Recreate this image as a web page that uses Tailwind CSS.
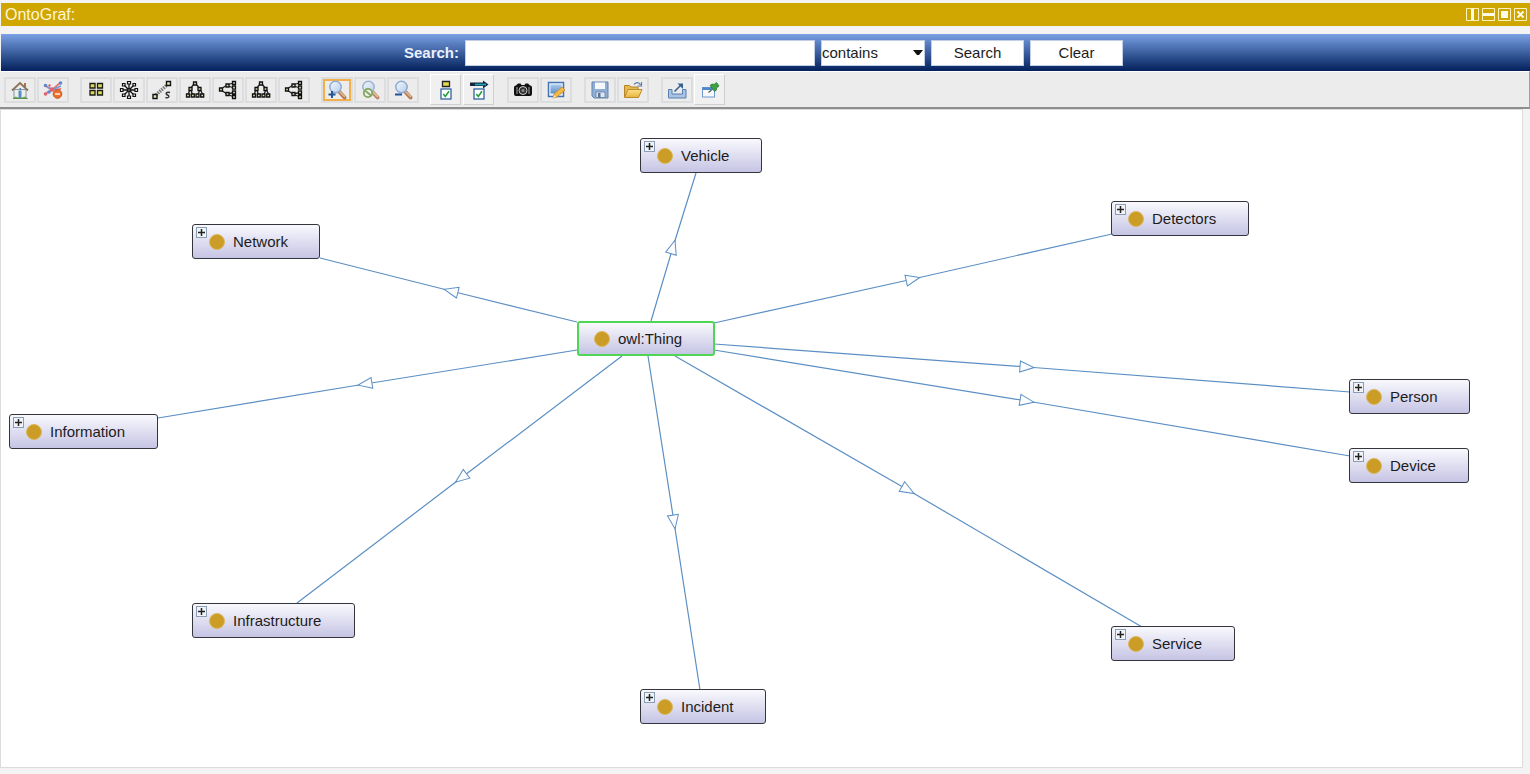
<!DOCTYPE html>
<html lang="en">
<head>
<meta charset="utf-8">
<meta name="viewport" content="width=device-width, initial-scale=1">
<title>OntoGraf</title>
<script src="https://cdn.jsdelivr.net/npm/@tailwindcss/browser@4"></script>
</head>
<body class="min-h-screen flex flex-col bg-[#f3f3f3] font-['Liberation_Sans',Arial,sans-serif] text-[#1c1c1c]">

<!-- Shared icon shapes -->
<svg class="absolute size-0" aria-hidden="true">
  <defs>
    <linearGradient id="lens" x1="0" y1="0" x2="1" y2="1"><stop offset="0" stop-color="#f4f9fe"/><stop offset="1" stop-color="#b4cdec"/></linearGradient>
    <linearGradient id="blue" x1="0" y1="0" x2="0" y2="1"><stop offset="0" stop-color="#a9c8ee"/><stop offset="1" stop-color="#5f8fcb"/></linearGradient>
    <linearGradient id="folder" x1="0" y1="0" x2="0" y2="1"><stop offset="0" stop-color="#fbe08a"/><stop offset="1" stop-color="#e9b437"/></linearGradient>
  </defs>
  <symbol id="i-tree-v" viewBox="0 0 20 20">
    <path d="M9 4L5 9L3 15M6 10L7.500 15M11 4L15 9L13 15M15.500 10L18 15" fill="none" stroke="#222" stroke-width="1.300"/>
    <g fill="#d8d8b0" stroke="#111" stroke-width="1.300"><path d="M8.500 2h3v3h-3zM4 7.500h3v3h-3zM13 7.500h3v3h-3zM1.500 14h3v3h-3zM6.300 14h3v3h-3zM11 14h3v3h-3zM15.700 14h3v3h-3z"/></g>
  </symbol>
  <symbol id="i-tree-h" viewBox="0 0 20 20">
    <path d="M3 9L9 5L15 3M10 6L16 8M3 10L9 14L16 12.500M10 14.500L16 17" fill="none" stroke="#222" stroke-width="1.300"/>
    <g fill="#d8d8b0" stroke="#111" stroke-width="1.300"><path d="M1.500 8h3v3h-3zM8 4h3v3h-3zM8 12.500h3v3h-3zM14.500 1.500h3v3h-3zM14.500 6.200h3v3h-3zM14.500 11h3v3h-3zM14.500 15.500h3v3h-3z"/></g>
  </symbol>
  <symbol id="i-lens" viewBox="0 0 20 20">
    <path d="M12.500 12L17.500 17.500" stroke="#b77a55" stroke-width="4" stroke-linecap="round"/>
    <path d="M13 12L17.500 16.500" stroke="#e3b994" stroke-width="1.600" stroke-linecap="round"/>
    <circle cx="8.500" cy="7" r="5.700" fill="url(#lens)" stroke="#8eaad2" stroke-width="1.500"/>
  </symbol>
  <symbol id="i-check" viewBox="0 0 12 12">
    <rect x="1" y="1" width="10" height="10" fill="#fff" stroke="#23579a" stroke-width="1.200"/>
    <path d="M3.300 6L5.300 8.500L9 3.300" fill="none" stroke="#24a03c" stroke-width="1.600"/>
  </symbol>
  <symbol id="i-plus" viewBox="0 0 11 11">
    <rect x=".5" y=".5" width="10" height="10" fill="#f0f4f8" stroke="#8b9db5"/>
    <path d="M2 5.500h7M5.500 2v7" stroke="#222" stroke-width="1.500"/>
  </symbol>
</svg>

<header class="mt-[3px] ml-px flex h-[23px] items-center justify-between bg-[#cfa700] pr-[3px] pl-1 text-[#fff5d8]">
  <h1 class="text-base leading-5">OntoGraf:</h1>
  <div class="flex gap-[3px]">
    <button aria-label="Split vertically" class="block"><svg class="block size-[13px]" viewBox="0 0 13 13"><path d="M.5.5h12v12H.5z" fill="none" stroke="#fff3c0"/><path d="M5 1h3v11H5z" fill="#fffbe8"/></svg></button>
    <button aria-label="Split horizontally" class="block"><svg class="block size-[13px]" viewBox="0 0 13 13"><path d="M.5.5h12v12H.5z" fill="none" stroke="#fff3c0"/><path d="M1 5h11v3H1z" fill="#fffbe8"/></svg></button>
    <button aria-label="Float" class="block"><svg class="block size-[13px]" viewBox="0 0 13 13"><path d="M.5.5h12v12H.5z" fill="none" stroke="#fff3c0"/><path d="M3 3h7v7H3z" fill="#fffbe8"/></svg></button>
    <button aria-label="Close" class="block"><svg class="block size-[13px]" viewBox="0 0 13 13"><path d="M.5.5h12v12H.5z" fill="none" stroke="#fff3c0"/><path d="M3.500 3.500l6 6M9.500 3.500l-6 6" stroke="#fffbe8" stroke-width="2"/></svg></button>
  </div>
</header>

<form class="mt-2 ml-px flex h-[37px] items-center justify-center bg-linear-to-b from-[#7ba2e6] to-[#04215c] pr-1 text-[15px] leading-5" onsubmit="return false">
  <label for="q" class="mr-[6px] font-bold text-[#eaf0fc]">Search:</label>
  <input id="q" type="text" class="h-[26px] w-[350px] border border-[#c3cfe6] bg-white px-1 outline-none">
  <div class="relative ml-[6px] h-[26px] w-[104px]">
    <select aria-label="Match mode" class="h-full w-full appearance-none border border-[#c3cfe6] bg-white"><option>contains</option><option>starts with</option><option>ends with</option><option>exact match</option><option>regexp</option></select>
    <svg class="pointer-events-none absolute top-[10px] right-[2px] h-[6px] w-[10px]" viewBox="0 0 10 6"><path d="M0 0h10L6 5H4z" fill="#111"/></svg>
  </div>
  <button class="ml-[6px] h-[26px] w-[93px] border border-[#c3cfe6] bg-white">Search</button>
  <button type="button" class="ml-[6px] h-[26px] w-[93px] border border-[#c3cfe6] bg-white">Clear</button>
</form>

<div role="toolbar" aria-label="Graph tools" class="flex h-[38px] items-center gap-[11px] border-t border-r border-b-2 border-t-white border-r-[#a0a0a0] border-b-[#8e8e8e] bg-[#ececec] pl-1">
  <div class="flex gap-px">
    <button aria-label="Home" class="flex h-[26px] w-8 items-center justify-center border-2 border-[#dcdddf]"><svg class="size-5 shrink-0" viewBox="0 0 20 20"><path d="M4 9.500h12V18H4z" fill="#e9f1ea" stroke="#8795a5"/><path d="M14 3v4l2 2V3z" fill="#b86e42"/><path d="M2 10.500L10 3l8 7.500" fill="none" stroke="#8b7359" stroke-width="1.800"/><path d="M8.500 10.500h3V18h-3z" fill="#5b8ac3"/><path d="M9.500 8h1.500v1.500H9.500z" fill="#4d79b5"/><path d="M3 18.500c2-2.500 4-2 5 0zM12 18.500c1-2 4-2.500 5.500 0z" fill="#6aa64d"/><path d="M3 18.500h14.500" stroke="#5c9349"/></svg></button>
    <button aria-label="Clear graph" class="flex h-[26px] w-8 items-center justify-center border-2 border-[#dcdddf]"><svg class="size-5 shrink-0" viewBox="0 0 20 20"><path d="M2 5.500L9 10L17 3M2 14L9 10L18 9" fill="none" stroke="#e2747c" stroke-width="1.800"/><path d="M5 7.500L10 9.500L18 6" fill="none" stroke="#6e99d8" stroke-width="1.500"/><g fill="#5c88d0"><circle cx="2.500" cy="5.500" r="1.800"/><circle cx="17.500" cy="3" r="1.800"/><circle cx="6" cy="12" r="1.800"/></g><g fill="#e0606c"><circle cx="2.500" cy="14" r="1.800"/><circle cx="9" cy="9.500" r="2.200"/><circle cx="6.500" cy="5.500" r="1.200"/></g><circle cx="14.500" cy="14" r="4.300" fill="#e9722f" stroke="#c65618"/><path d="M12 14h5" stroke="#ffe8cf" stroke-width="1.600"/></svg></button>
  </div>

  <div class="flex gap-px">
    <button aria-label="Grid layout" class="flex h-[26px] w-8 items-center justify-center border-2 border-[#dcdddf]"><svg class="size-5 shrink-0" viewBox="0 0 20 20"><g fill="#dcd95a" stroke="#1b1b12" stroke-width="1.300"><path d="M4 3.500h5v4.500H4zM11.500 3.500h5v4.500h-5zM4 10.500h5V15H4zM11.500 10.500h5V15h-5z"/></g></svg></button>
    <button aria-label="Radial layout" class="flex h-[26px] w-8 items-center justify-center border-2 border-[#dcdddf]"><svg class="size-5 shrink-0" viewBox="0 0 20 20"><path d="M10 3v14M3 10h14M5 5l10 10M15 5L5 15" stroke="#111" stroke-width="1.300"/><g fill="#eee" stroke="#111" stroke-width="1.200"><path d="M8.500 1.500h3v2.500h-3zM8.500 16h3v2.500h-3zM1.500 8.500H4v3H1.500zM16 8.500h2.500v3H16zM3.500 3.500H6V6H3.500zM14 3.500h2.500V6H14zM3.500 14H6v2.500H3.500zM14 14h2.500v2.500H14z"/><path d="M8.500 8.500h3v3h-3z" fill="#555"/></g></svg></button>
    <button aria-label="Spring layout" class="flex h-[26px] w-8 items-center justify-center border-2 border-[#dcdddf]"><svg class="size-5 shrink-0" viewBox="0 0 20 20"><path d="M4 15L16 4" stroke="#777" stroke-width="3.500" stroke-dasharray="1.500 1"/><path d="M14.500 1.500h4v4h-4zM1 14.500h4v4H1z" fill="#e6e6b2" stroke="#111" stroke-width="1.400"/><path d="M18 12.500c-4-1-5 1.500-2.500 2.500s1.500 3.500-2 2.500" fill="none" stroke="#333" stroke-width="1.400"/></svg></button>
    <button aria-label="Vertical tree" class="flex h-[26px] w-8 items-center justify-center border-2 border-[#dcdddf]"><svg class="size-5 shrink-0"><use href="#i-tree-v"/></svg></button>
    <button aria-label="Horizontal tree" class="flex h-[26px] w-8 items-center justify-center border-2 border-[#dcdddf]"><svg class="size-5 shrink-0"><use href="#i-tree-h"/></svg></button>
    <button aria-label="Vertical directed layout" class="flex h-[26px] w-8 items-center justify-center border-2 border-[#dcdddf]"><svg class="size-5 shrink-0"><use href="#i-tree-v"/></svg></button>
    <button aria-label="Horizontal directed layout" class="flex h-[26px] w-8 items-center justify-center border-2 border-[#dcdddf]"><svg class="size-5 shrink-0"><use href="#i-tree-h"/></svg></button>
  </div>

  <div class="flex gap-px">
    <button aria-label="Zoom in" class="flex h-[26px] w-8 items-center justify-center border-2 border-[#dcdddf]"><span class="flex h-[22px] w-7 items-center justify-center border-2 border-[#f2b04c]"><svg class="size-5 shrink-0" viewBox="0 0 20 20"><use href="#i-lens"/><path d="M1.500 14.500h7M5 11v7" stroke="#1d5397" stroke-width="1.900"/></svg></span></button>
    <button aria-label="No zoom" class="flex h-[26px] w-8 items-center justify-center border-2 border-[#dcdddf]"><svg class="size-5 shrink-0 opacity-85" viewBox="0 0 20 20"><use href="#i-lens"/><circle cx="8" cy="13" r="4.200" fill="#eef2e6" stroke="#709a46" stroke-width="1.800"/><path d="M5 10.500l6 5" stroke="#709a46" stroke-width="1.700"/></svg></button>
    <button aria-label="Zoom out" class="flex h-[26px] w-8 items-center justify-center border-2 border-[#dcdddf]"><svg class="size-5 shrink-0" viewBox="0 0 20 20"><use href="#i-lens"/><path d="M2 14.500h7" stroke="#1d5397" stroke-width="2"/></svg></button>
  </div>

  <div class="flex gap-[2px]">
    <button aria-label="Node types" class="flex h-[31px] w-[31px] items-center justify-center border border-t-white border-l-white border-[#cfcfcf] bg-[#f0f0f0]"><svg class="h-5 w-5 shrink-0" viewBox="0 0 20 20"><path d="M6.500 1.500h7v5h-7z" fill="#e0db4f" stroke="#222" stroke-width="1.300"/><use href="#i-check" x="4" y="8" width="12" height="12"/></svg></button>
    <button aria-label="Arc types" class="flex h-[31px] w-[31px] items-center justify-center border border-t-white border-l-white border-[#cfcfcf] bg-[#f0f0f0]"><svg class="h-5 w-5 shrink-0" viewBox="0 0 20 20"><path d="M1 2.500h13V.500L19.500 4.500L14 8.500V6H1z" fill="#13283a"/><path d="M6 4.500h11" stroke="#1fa6bd" stroke-width="1.700"/><use href="#i-check" x="4" y="8" width="12" height="12"/></svg></button>
  </div>

  <div class="ml-[2px] flex gap-px">
    <button aria-label="Export image" class="flex h-[26px] w-8 items-center justify-center border-2 border-[#dcdddf]"><svg class="size-5 shrink-0" viewBox="0 0 20 20"><path d="M1 7.500Q1 5.500 3 5.500L5 3.500h2.500l1 1.500h3l1-1.500H15l2 2Q19 5.500 19 7.500V14Q19 16 17 16H3Q1 16 1 14z" fill="#111"/><circle cx="10" cy="10.500" r="4" fill="#333" stroke="#ccc"/><circle cx="10" cy="10.500" r="1.600" fill="#888"/><path d="M4 7v7M16 7v7" stroke="#aaa"/></svg></button>
    <button aria-label="Edit notes" class="flex h-[26px] w-8 items-center justify-center border-2 border-[#dcdddf]"><svg class="size-5 shrink-0" viewBox="0 0 20 20"><rect x="2.500" y="2.500" width="15" height="14" fill="#eaf2fb" stroke="#4475b5" stroke-width="1.500"/><path d="M4.500 4.500h11v9h-11z" fill="url(#blue)"/><path d="M7 18l1-4L16 7l3 3-8 7z" fill="#f4b942" stroke="#bf852a" stroke-width=".8"/><path d="M7 18l1-3 2 2z" fill="#fbe7b8"/></svg></button>
  </div>

  <div class="ml-px flex gap-px">
    <button aria-label="Save graph" class="flex h-[26px] w-8 items-center justify-center border-2 border-[#dcdddf]"><svg class="size-5 shrink-0" viewBox="0 0 20 20"><path d="M2 2h16v16H4l-2-2z" fill="#8eaed6" stroke="#6583ad"/><path d="M5 2.500h10V9H5z" fill="#f5f8fb"/><path d="M6 12h9v5.500H6z" fill="#e0e6ed" stroke="#6681a5" stroke-width=".8"/><path d="M8 13h2.500v4.500H8z" fill="#54739f"/></svg></button>
    <button aria-label="Open graph" class="flex h-[26px] w-8 items-center justify-center border-2 border-[#dcdddf]"><svg class="size-5 shrink-0" viewBox="0 0 20 20"><path d="M1.500 17V5.500h5L8 7h7v4" fill="#e7ba50" stroke="#b58428"/><path d="M1.500 17.500L5 9.500h14l-3.500 8z" fill="url(#folder)" stroke="#b9892d"/><path d="M11 4.500C13 2 16 2 17.500 5M18.500 2v4h-4" fill="none" stroke="#607fa8" stroke-width="1.200"/></svg></button>
  </div>

  <div class="ml-px flex items-center gap-px">
    <button aria-label="Export graph" class="flex h-[26px] w-8 items-center justify-center border-2 border-[#dcdddf]"><svg class="size-5 shrink-0" viewBox="0 0 20 20"><path d="M1.500 9.500h3.500v4.500h10.500V9.500H19v8.500H1.500z" fill="#aac3e2" stroke="#577fae"/><path d="M7.500 11.500L14 5" stroke="#34618f" stroke-width="1.600"/><path d="M10.500 3.500h5.500V9z" fill="#34618f"/></svg></button>
    <button aria-label="Pin tooltips" class="flex h-[31px] w-[31px] items-center justify-center border border-t-white border-l-white border-[#cfcfcf] bg-[#f0f0f0]"><svg class="size-5 shrink-0" viewBox="0 0 20 20"><rect x="2.500" y="7.500" width="12" height="9.500" fill="#f7fafd" stroke="#6c98ce"/><path d="M2.500 7.500h12v2.500h-12z" fill="#4f87cf"/><path d="M11.500 10L8.500 12.500" stroke="#555" stroke-width="1.200"/><path d="M10 5.500l2-1.500 2 .500 2.500-2 2.500 3.500-2.500 2 0 2-2 1.500z" fill="#3fa045" stroke="#277a30" stroke-width=".8"/></svg></button>
  </div>
</div>

<!-- Graph canvas: nodes sit at free positions, arcs are drawn underneath -->
<main class="relative mr-[7px] mb-[6px] min-h-[659px] flex-1 overflow-hidden border border-[#dcdcdc] bg-white text-[15px] leading-5">
  <svg class="absolute top-0 left-0 h-[657px] w-[1521px]" viewBox="1 110 1521 657" aria-hidden="true">
    <defs>
      <marker id="arrow" viewBox="-8 -6 16 12" markerWidth="16" markerHeight="12" markerUnits="userSpaceOnUse" orient="auto" overflow="visible">
        <path d="M-7-5.500L7 0L-7 5.500Z" fill="#fbfdff" stroke="#5b8fc4" stroke-width="1"/>
      </marker>
    </defs>
    <g fill="none" stroke="#5b8fc4" stroke-width="1.200" marker-mid="url(#arrow)">
      <polyline points="651,321 673,247 696,173"/>
      <polyline points="714,323 913,279 1112,234"/>
      <polyline points="577,322 451,291 320,258"/>
      <polyline points="577,350 365,384 158,418"/>
      <polyline points="622,356 461,478 297,603"/>
      <polyline points="648,356 674,522 700,690"/>
      <polyline points="675,356 908,490 1142,627"/>
      <polyline points="714,344 1027,367 1350,392"/>
      <polyline points="714,350 1027,401 1350,456"/>
    </g>
  </svg>

  <div class="absolute top-[28px] left-[639px] flex h-[35px] w-[122px] items-center rounded-[3px] border border-[#34343c] bg-linear-to-b from-[#f9f9fd] to-[#c6c4e4] pl-4"><svg class="absolute top-[2px] left-[3px] size-[11px]"><use href="#i-plus"/></svg><i class="mr-2 size-4 rounded-full border border-[#dcb75c] bg-[#cb9d27]"></i>Vehicle</div>
  <div class="absolute top-[91px] left-[1110px] flex h-[35px] w-[138px] items-center rounded-[3px] border border-[#34343c] bg-linear-to-b from-[#f9f9fd] to-[#c6c4e4] pl-4"><svg class="absolute top-[2px] left-[3px] size-[11px]"><use href="#i-plus"/></svg><i class="mr-2 size-4 rounded-full border border-[#dcb75c] bg-[#cb9d27]"></i>Detectors</div>
  <div class="absolute top-[114px] left-[191px] flex h-[35px] w-[128px] items-center rounded-[3px] border border-[#34343c] bg-linear-to-b from-[#f9f9fd] to-[#c6c4e4] pl-4"><svg class="absolute top-[2px] left-[3px] size-[11px]"><use href="#i-plus"/></svg><i class="mr-2 size-4 rounded-full border border-[#dcb75c] bg-[#cb9d27]"></i>Network</div>
  <div class="absolute top-[211px] left-[576px] flex h-[35px] w-[138px] items-center rounded-[3px] border-2 border-[#4fd657] bg-linear-to-b from-[#f9f9fd] to-[#c6c4e4] pl-[15px]"><i class="mr-2 size-4 rounded-full border border-[#dcb75c] bg-[#cb9d27]"></i>owl:Thing</div>
  <div class="absolute top-[269px] left-[1348px] flex h-[35px] w-[121px] items-center rounded-[3px] border border-[#34343c] bg-linear-to-b from-[#f9f9fd] to-[#c6c4e4] pl-4"><svg class="absolute top-[2px] left-[3px] size-[11px]"><use href="#i-plus"/></svg><i class="mr-2 size-4 rounded-full border border-[#dcb75c] bg-[#cb9d27]"></i>Person</div>
  <div class="absolute top-[338px] left-[1348px] flex h-[35px] w-[120px] items-center rounded-[3px] border border-[#34343c] bg-linear-to-b from-[#f9f9fd] to-[#c6c4e4] pl-4"><svg class="absolute top-[2px] left-[3px] size-[11px]"><use href="#i-plus"/></svg><i class="mr-2 size-4 rounded-full border border-[#dcb75c] bg-[#cb9d27]"></i>Device</div>
  <div class="absolute top-[304px] left-[8px] flex h-[35px] w-[149px] items-center rounded-[3px] border border-[#34343c] bg-linear-to-b from-[#f9f9fd] to-[#c6c4e4] pl-4"><svg class="absolute top-[2px] left-[3px] size-[11px]"><use href="#i-plus"/></svg><i class="mr-2 size-4 rounded-full border border-[#dcb75c] bg-[#cb9d27]"></i>Information</div>
  <div class="absolute top-[493px] left-[191px] flex h-[35px] w-[163px] items-center rounded-[3px] border border-[#34343c] bg-linear-to-b from-[#f9f9fd] to-[#c6c4e4] pl-4"><svg class="absolute top-[2px] left-[3px] size-[11px]"><use href="#i-plus"/></svg><i class="mr-2 size-4 rounded-full border border-[#dcb75c] bg-[#cb9d27]"></i>Infrastructure</div>
  <div class="absolute top-[579px] left-[639px] flex h-[35px] w-[126px] items-center rounded-[3px] border border-[#34343c] bg-linear-to-b from-[#f9f9fd] to-[#c6c4e4] pl-4"><svg class="absolute top-[2px] left-[3px] size-[11px]"><use href="#i-plus"/></svg><i class="mr-2 size-4 rounded-full border border-[#dcb75c] bg-[#cb9d27]"></i>Incident</div>
  <div class="absolute top-[516px] left-[1110px] flex h-[35px] w-[124px] items-center rounded-[3px] border border-[#34343c] bg-linear-to-b from-[#f9f9fd] to-[#c6c4e4] pl-4"><svg class="absolute top-[2px] left-[3px] size-[11px]"><use href="#i-plus"/></svg><i class="mr-2 size-4 rounded-full border border-[#dcb75c] bg-[#cb9d27]"></i>Service</div>
</main>
</body>
</html>
